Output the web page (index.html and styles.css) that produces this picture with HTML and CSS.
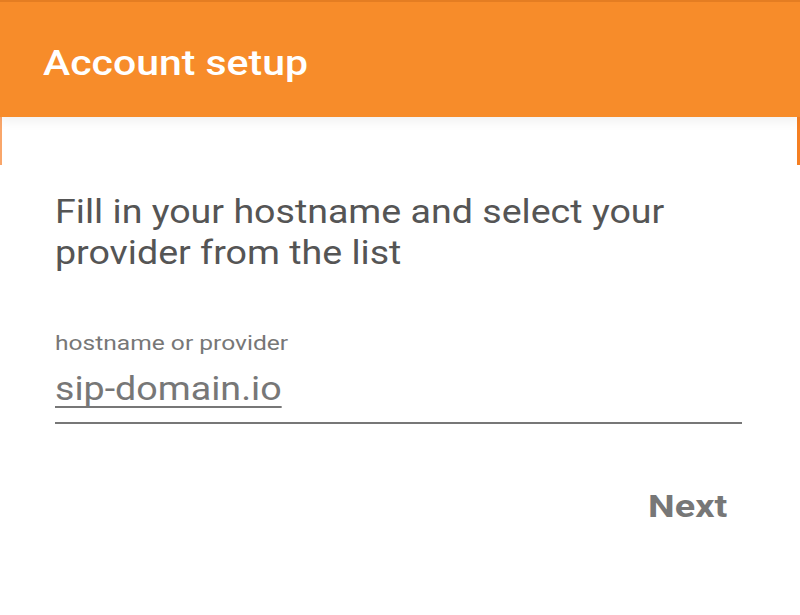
FILE: index.html
```html
<!DOCTYPE html>
<html>
<head>
<meta charset="utf-8">
<link rel="stylesheet" href="styles.css">
</head>
<body>
<div class="screen">
  <header class="appbar">
    <h1 class="title">Account setup</h1>
  </header>
  <main class="card">
    <p class="intro"><span class="line">Fill in your hostname and select your</span><span class="line">provider from the list</span></p>
    <div class="field">
      <label class="label">hostname or provider</label>
      <div class="input"><span class="value">sip-domain.io</span></div>
    </div>
    <div class="actions">
      <button class="next">Next</button>
    </div>
  </main>
</div>
</body>
</html>
```

FILE: styles.css
```css
html, body {
  margin: 0;
  padding: 0;
  background: #ffffff;
  font-family: Roboto, "Noto Sans", sans-serif;
}
.screen {
  width: 800px;
  height: 615px;
  position: relative;
  overflow: hidden;
  background: linear-gradient(to right, #f9a66a 0 2px, #ffffff 2px 797px, #f57f22 797px 800px);
  background-size: 100% 165px;
  background-repeat: no-repeat;
}
.appbar {
  height: 117px;
  background: #f78c2a;
  border-top: 2px solid #e47d22;
  box-sizing: border-box;
  padding: 44px 0 0 43px;
  box-shadow: 0 3px 12px rgba(0,0,0,0.07);
  position: relative;
  z-index: 1;
}
.title {
  margin: 0;
  color: #ffffff;
  font-weight: 500;
  font-size: 35px;
  line-height: 35px;
  display: inline-block;
  transform: scaleX(1.17);
  transform-origin: left center;
}
.card {
  margin: 0 3px 0 2px;
  background: #ffffff;
  padding: 74px 55px 0 53px;
  min-height: 498px;
  box-sizing: border-box;
}
.intro {
  margin: 0;
  font-size: 34px;
  line-height: 41px;
  color: #555555;
}
.line {
  display: block;
  white-space: nowrap;
  transform: scaleX(1.105);
  transform-origin: left center;
}
.field {
  margin-top: 58px;
}
.label {
  display: block;
  font-size: 21px;
  color: #777777;
  line-height: 24px;
  transform: scaleX(1.17);
  transform-origin: left center;
}
.input {
  border-bottom: 2px solid #777777;
  padding: 14px 0 13px 0;
}
.value {
  display: inline-block;
  font-size: 33px;
  line-height: 40px;
  color: #777777;
  text-decoration: underline;
  text-decoration-thickness: 1.5px;
  text-underline-offset: 6px;
  text-decoration-skip-ink: none;
  transform: scaleX(1.14);
  transform-origin: left center;
}
.actions {
  display: flex;
  justify-content: flex-end;
  margin-top: 65px;
}
.next {
  background: none;
  border: none;
  font-family: Roboto, "Noto Sans", sans-serif;
  font-weight: 700;
  font-size: 31px;
  line-height: 36px;
  color: #777777;
  padding: 0 12px 0 0;
  transform: scaleX(1.22);
  transform-origin: right center;
}
```
